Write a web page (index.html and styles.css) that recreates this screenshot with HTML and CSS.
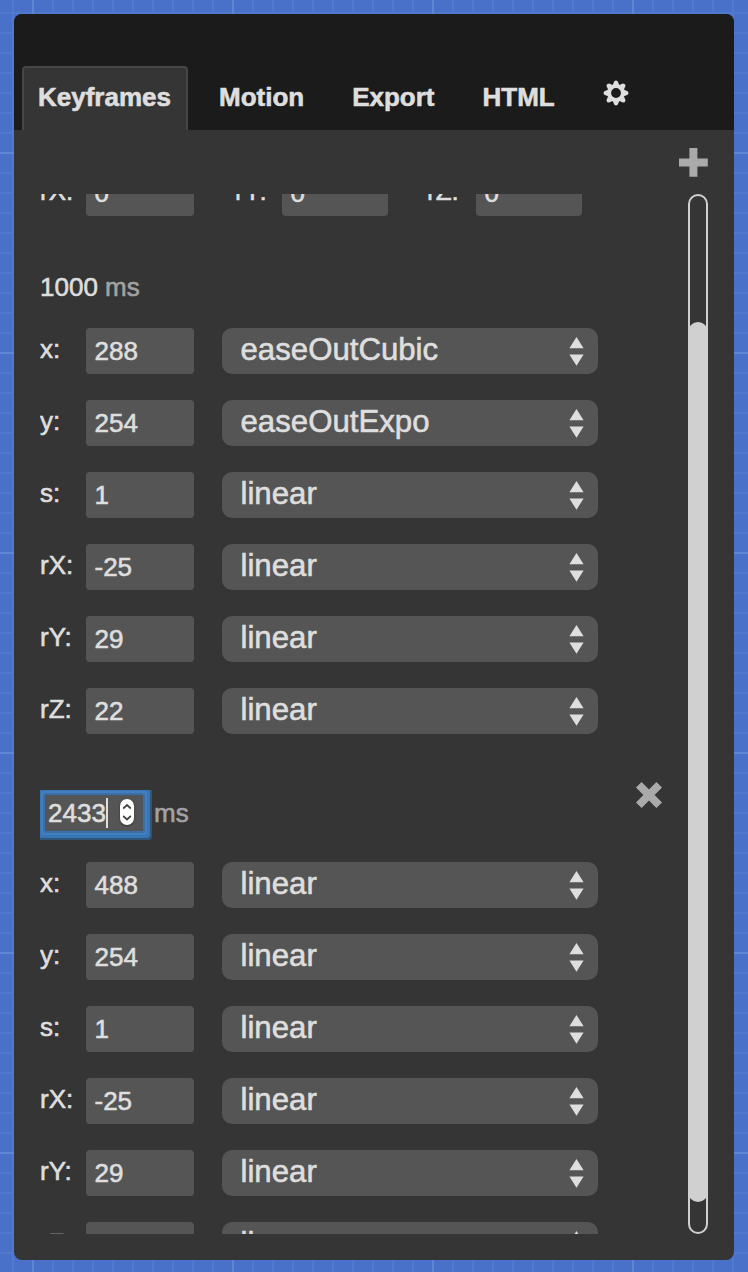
FILE: index.html
```
<!DOCTYPE html>
<html lang="en">
<head>
<meta charset="utf-8">
<title>Keyframes</title>
<link rel="stylesheet" href="styles.css">
</head>
<body>
<svg width="0" height="0" class="defs">
  <symbol id="arrows" viewBox="0 0 15 29"><path d="M7.5 0 14.6 11.3H.4ZM7.5 28.7.4 17.4h14.2Z"/></symbol>
</svg>
<main class="panel">
  <nav class="tabs">
    <span class="tab active">Keyframes</span>
    <span class="tab">Motion</span>
    <span class="tab">Export</span>
    <span class="tab">HTML</span>
    <svg class="gear" viewBox="-13 -13 26 26">
      <circle r="6.9" fill="none" stroke="#dedede" stroke-width="4"/>
      <g fill="#dedede">
        <path id="tooth" d="M-3.2-8-1.8-11.6Q0-13.4 1.8-11.6L3.2-8Z"/>
        <use href="#tooth" transform="rotate(45)"/>
        <use href="#tooth" transform="rotate(90)"/>
        <use href="#tooth" transform="rotate(135)"/>
        <use href="#tooth" transform="rotate(180)"/>
        <use href="#tooth" transform="rotate(225)"/>
        <use href="#tooth" transform="rotate(270)"/>
        <use href="#tooth" transform="rotate(315)"/>
      </g>
    </svg>
  </nav>
  <div class="toolbar"><svg class="plus" viewBox="0 0 29 29"><path d="M10.4 0h8v10.4h10.4v8H18.4v10.4h-8V18.4H0v-8h10.4Z"/></svg></div>
  <div class="content">
    <div class="frames">
      <div class="row first">
        <span class="label">rX:</span><span class="field">0</span>
        <span class="label second">rY:</span><span class="field narrow">0</span>
        <span class="label third">rZ:</span><span class="field narrow">0</span>
      </div>
      <div class="heading"><span class="time">1000</span> <span class="unit">ms</span></div>
      <div class="rows">
        <div class="row"><span class="label">x:</span><span class="field">288</span><span class="select">easeOutCubic<svg><use href="#arrows"/></svg></span></div>
        <div class="row"><span class="label">y:</span><span class="field">254</span><span class="select">easeOutExpo<svg><use href="#arrows"/></svg></span></div>
        <div class="row"><span class="label">s:</span><span class="field">1</span><span class="select">linear<svg><use href="#arrows"/></svg></span></div>
        <div class="row"><span class="label">rX:</span><span class="field">-25</span><span class="select">linear<svg><use href="#arrows"/></svg></span></div>
        <div class="row"><span class="label">rY:</span><span class="field">29</span><span class="select">linear<svg><use href="#arrows"/></svg></span></div>
        <div class="row"><span class="label">rZ:</span><span class="field">22</span><span class="select">linear<svg><use href="#arrows"/></svg></span></div>
      </div>
      <div class="heading editing">
        <span class="focus-clip"><span class="focus">2433<i class="caret"></i><svg class="stepper" viewBox="0 0 14 26"><rect width="14" height="26" rx="7" fill="#fff"/><path d="M3.2 9.5 7 6l3.8 3.5M3.2 17 7 20.5l3.8-3.5" fill="none" stroke="#444" stroke-width="1.7"/></svg></span></span>
        <span class="unit">ms</span>
        <svg class="remove" viewBox="0 0 26 26"><path d="M5.6 0 13 7.4 20.4 0 26 5.6 18.6 13 26 20.4 20.4 26 13 18.6 5.6 26 0 20.4 7.4 13 0 5.6Z"/></svg>
      </div>
      <div class="rows">
        <div class="row"><span class="label">x:</span><span class="field">488</span><span class="select">linear<svg><use href="#arrows"/></svg></span></div>
        <div class="row"><span class="label">y:</span><span class="field">254</span><span class="select">linear<svg><use href="#arrows"/></svg></span></div>
        <div class="row"><span class="label">s:</span><span class="field">1</span><span class="select">linear<svg><use href="#arrows"/></svg></span></div>
        <div class="row"><span class="label">rX:</span><span class="field">-25</span><span class="select">linear<svg><use href="#arrows"/></svg></span></div>
        <div class="row"><span class="label">rY:</span><span class="field">29</span><span class="select">linear<svg><use href="#arrows"/></svg></span></div>
        <div class="row"><span class="label">rZ:</span><span class="field">22</span><span class="select">linear<svg><use href="#arrows"/></svg></span></div>
      </div>
    </div>
    <div class="track"><div class="thumb"></div></div>
  </div>
</main>
</body>
</html>
```
FILE: styles.css
```
* { box-sizing: border-box; }
body {
  margin: 0;
  padding: 14px;
  height: 1272px;
  overflow: hidden;
  font: 26px "Liberation Sans", Arial, sans-serif;
  color: #dedede;
  background-color: #4971c9;
  background-image:
    linear-gradient(90deg, #5f86d2 2px, transparent 2px),
    linear-gradient(#5f86d2 2px, transparent 2px),
    linear-gradient(90deg, #517ace 2px, transparent 2px),
    linear-gradient(#517ace 2px, transparent 2px);
  background-size: 200px 200px, 200px 200px, 20px 20px, 20px 20px;
  background-position: 32px 0, 0 152px, 12px 0, 0 12px;
}
.defs { position: absolute; }
svg { display: block; flex: none; }
.panel {
  display: flex;
  flex-direction: column;
  width: 720px;
  height: 1246px;
  border-radius: 8px;
  overflow: hidden;
  background: #353535;
}
.tabs {
  display: flex;
  align-items: flex-end;
  height: 116px;
  padding-left: 8px;
  background: #1b1b1b;
  font-weight: bold;
}
.tab {
  height: 64px;
  line-height: 58px;
  padding: 0 14px;
  margin-right: 16px;
  border: 2px solid transparent;
  border-bottom: 0;
  border-radius: 4px 4px 0 0;
  -webkit-text-stroke: .6px;
}
.tab.active { width: 166px; margin-right: 15px; background: #353535; border-color: #464646; }
.gear { width: 26px; height: 26px; margin: 0 0 24px 16px; }
.toolbar { display: flex; justify-content: flex-end; height: 64px; padding: 18px 26px 0 0; }
.plus { width: 29px; height: 29px; fill: #aaa; }
.content { display: flex; justify-content: space-between; height: 1040px; padding: 0 26px; }
.frames { width: 630px; height: 1040px; overflow: hidden; -webkit-text-stroke: .6px; }
.row { display: flex; height: 46px; }
.rows { display: flex; flex-direction: column; gap: 26px; }
.first { margin-top: -24px; }
.label { width: 46px; line-height: 42px; }
.second { margin-left: 41px; width: 47px; }
.third { margin-left: 39px; width: 49px; }
.field {
  width: 108px;
  line-height: 46px;
  padding-left: 8.5px;
  border-radius: 4px;
  background: #555;
}
.narrow { width: 106px; }
.select {
  display: flex;
  justify-content: space-between;
  width: 376px;
  margin-left: 28px;
  padding: 0 14px 0 18.5px;
  border-radius: 10px;
  background: #555;
  font-size: 31.2px;
  line-height: 43px;
}
.select svg { width: 15px; height: 29px; margin-top: 9px; fill: #dedede; }
.heading { height: 46px; line-height: 46px; margin: 48px 0 18px; }
.unit { color: #a2a2a2; }
.editing { display: flex; margin: 56px 0 26px; }
.focus-clip { width: 114px; height: 52px; overflow: hidden; }
.focus {
  display: flex;
  width: 98px;
  height: 36px;
  margin: 5px;
  padding-left: 3px;
  line-height: 36px;
  background: #555;
  box-shadow: inset 0 0 0 1px #4a5663, 0 0 0 2px #3c6fa5, 0 0 0 4px #417fc1, 0 0 0 7px #3976b5, 0 0 0 9px #305579;
}
.focus { border-radius: 1px; }
.caret { width: 2px; height: 30px; margin-top: 3px; background: #dedede; }
.stepper { width: 14px; height: 26px; margin: 4px 0 0 12px; filter: drop-shadow(0 1px 1px #333); }
.remove { width: 26px; height: 26px; margin: -8px 8.5px 0 auto; fill: #aaa; }
.track {
  width: 20px;
  height: 1040px;
  border: 2px solid #d0d0d0;
  border-radius: 10px;
}
.thumb { width: 20px; height: 880px; margin: 126px -2px 0; border-radius: 10px; background: #d0d0d0; }
```
